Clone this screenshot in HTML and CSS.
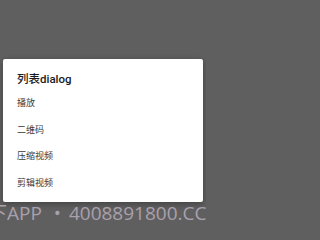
FILE: index.html
```html
<!DOCTYPE html>
<html lang="zh">
<head>
<meta charset="utf-8">
<link rel="stylesheet" href="styles.css">
</head>
<body>
<div class="screen">
  <div class="dialog">
    <div class="title">列表dialog</div>
    <div class="item">播放</div>
    <div class="item">二维码</div>
    <div class="item">压缩视频</div>
    <div class="item">剪辑视频</div>
  </div>
  <div class="watermark">下APP <span class="sep">•</span> 4008891800.CC</div>
</div>
</body>
</html>
```
FILE: styles.css
```css
html, body {
  margin: 0;
  padding: 0;
}
body {
  background: #5f5f5f;
  width: 206px;
  height: 237px;
  overflow: hidden;
  font-family: Roboto, "Noto Sans CJK SC", sans-serif;
}
.screen {
  padding-top: 59px;
}
.dialog {
  margin: 0 3px;
  background: #fff;
  border-radius: 2px;
  padding: 12px 0 6px;
  box-shadow: 0 2px 6px rgba(0, 0, 0, 0.3);
}
.title {
  padding-left: 14px;
  font-size: 11.5px;
  line-height: 16px;
  font-weight: 500;
  color: #1a1a1a;
  margin-bottom: 3px;
}
.item {
  padding-left: 14px;
  height: 26.5px;
  line-height: 26.5px;
  font-size: 9px;
  color: #3a3a3a;
}
.watermark {
  margin-top: 2px;
  margin-left: -12px;
  white-space: nowrap;
  overflow: hidden;
  font-family: "Open Sans", "Noto Sans CJK SC", sans-serif;
  font-size: 19px;
  line-height: 19px;
  color: #aaa0ad;
}
.sep {
  margin: 0 3px 0 7px;
}
```
